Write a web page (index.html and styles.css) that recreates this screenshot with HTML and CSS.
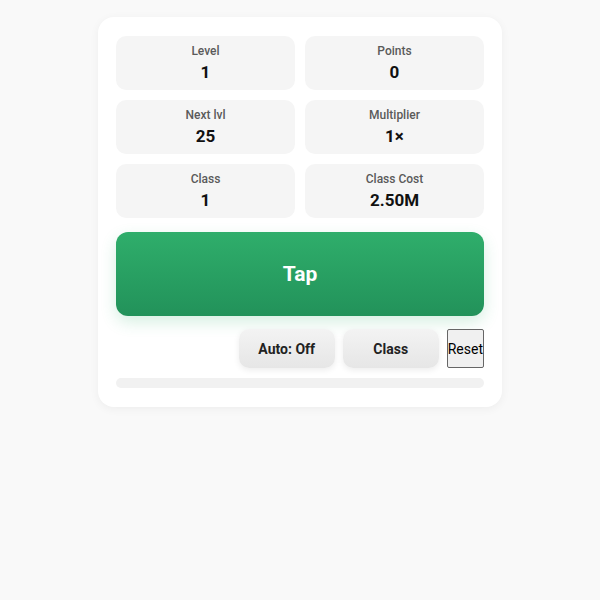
FILE: index.html
```html
<!DOCTYPE html>
<html lang="en">
<head>
    <meta charset="UTF-8">
    <meta name="viewport" content="width=device-width, initial-scale=1.0">
    <title>Tap</title>
    <link rel="stylesheet" href="styles.css">
</head>
<body>
    <div class="card">
        <!-- Stats -->
        <div class="stats">
            <div class="stat">
                <div class="stat-label">Level</div>
                <div class="stat-value">1</div>
            </div>
            <div class="stat">
                <div class="stat-label">Points</div>
                <div class="stat-value">0</div>
            </div>
            <div class="stat">
                <div class="stat-label">Next lvl</div>
                <div class="stat-value">25</div>
            </div>
            <div class="stat">
                <div class="stat-label">Multiplier</div>
                <div class="stat-value">1×</div>
            </div>
            <div class="stat">
                <div class="stat-label">Class</div>
                <div class="stat-value">1</div>
            </div>
            <div class="stat">
                <div class="stat-label">Class Cost</div>
                <div class="stat-value">2.50M</div>
            </div>
        </div>

        <button class="tap">Tap</button>

        <div class="controls">
            <button class="ctrl">Auto: Off</button>
            <button class="ctrl">Class</button>
            <button class="reset">Reset</button>
        </div>

        <div class="progress"><div class="progress-fill"></div></div>
    </div>
</body>
</html>
```

FILE: styles.css
```css
body {
    margin: 0;
    padding: 17px 0;
    background-color: #f9f9f9;
    font-family: Roboto, "Liberation Sans", sans-serif;
}
.card {
    width: 368px;
    margin: 0 auto;
    padding: 19px 18px 19px;
    background: white;
    border-radius: 16px;
    box-shadow: 0 2px 10px rgba(0,0,0,0.05);
}
.stats {
    display: grid;
    grid-template-columns: 1fr 1fr;
    gap: 10px;
}
.stat {
    height: 54px;
    background-color: #f5f5f5;
    border-radius: 10px;
    display: flex;
    flex-direction: column;
    align-items: center;
    justify-content: center;
    gap: 4px;
}
.stat-label {
    font-size: 12px;
    font-weight: 500;
    color: #5a5a5a;
}
.stat-value {
    font-size: 17px;
    font-weight: 700;
    color: #111;
}
.tap {
    display: block;
    width: 100%;
    height: 84px;
    margin-top: 14px;
    border: none;
    border-radius: 12px;
    background: linear-gradient(#2fae6b, #22925a);
    color: white;
    font-family: inherit;
    font-size: 21px;
    font-weight: 700;
    box-shadow: 0 6px 16px rgba(46,174,107,0.2);
    cursor: pointer;
}
.controls {
    display: flex;
    justify-content: flex-end;
    gap: 8px;
    margin-top: 13px;
}
.ctrl {
    width: 96px;
    height: 39px;
    border: none;
    border-radius: 10px;
    background: linear-gradient(#f3f3f3, #e6e6e6);
    box-shadow: 0 2px 6px rgba(0,0,0,0.08);
    font-family: inherit;
    font-size: 14px;
    font-weight: 700;
    color: #222;
    cursor: pointer;
}
.reset {
    height: 39px;
    padding: 0;
    border: 1px solid #666;
    border-radius: 2px;
    background-color: #f0f0f0;
    font-family: inherit;
    font-size: 14px;
    color: #000;
}
.progress {
    height: 10px;
    margin-top: 10px;
    background-color: #f1f1f1;
    border-radius: 5px;
    overflow: hidden;
}
.progress-fill {
    width: 0;
    height: 100%;
    background-color: #2fae6b;
}
```
